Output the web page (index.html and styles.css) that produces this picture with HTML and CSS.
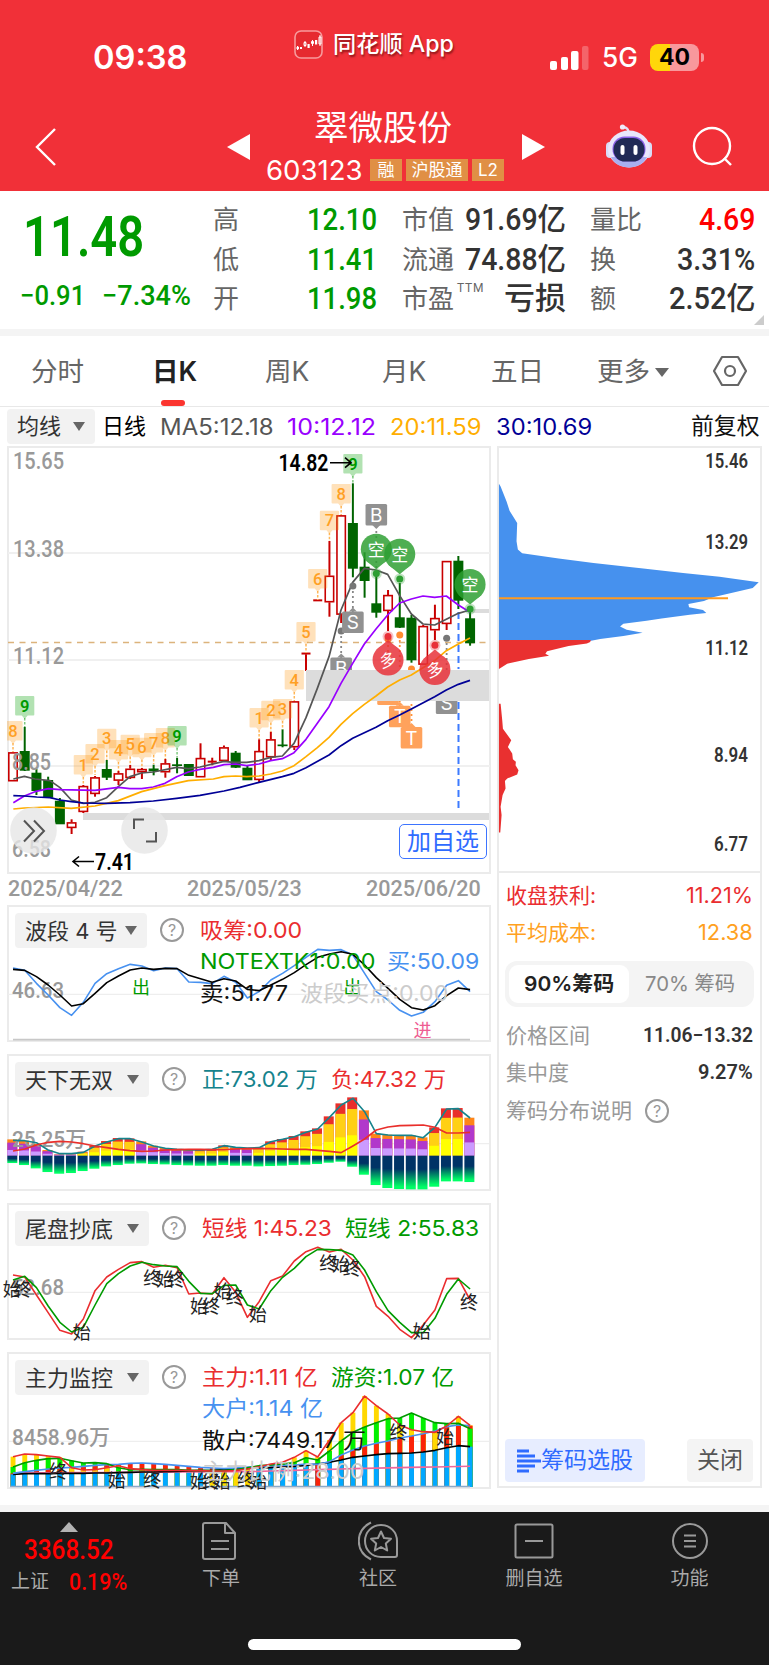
FILE: index.html
```html
<!DOCTYPE html>
<html lang="zh-CN">
<head>
<meta charset="utf-8">
<title>翠微股份 603123</title>
<link rel="stylesheet" href="styles.css">
</head>
<body>
<header class="top">
  <div class="status">
    <div class="clock"><span data-w="95">09:38</span></div>
    <div class="brand">
      <svg width="29" height="29" viewBox="0 0 29 29"><rect x="1" y="1" width="27" height="27" rx="6" fill="#e62a30" stroke="#f79a9c" stroke-width="1.6"/><g stroke="#fff" stroke-width="1" fill="none"><path d="M3.5 16v4M11 11v6M18.500 10v6M26 5v11"/><path d="M3 17h1.500v2H3zM10 12.500h2v3h-2zM17.500 11.500h2v2h-2zM25 7h2v7h-2z"/></g><path d="M6 17h2v2H6zM13.500 14h2.200v4h-2.200zM21 10h2.200v4.500H21z" fill="#fff"/></svg>
      <span data-w="121">同花顺 App</span>
    </div>
    <div class="signal">
      <svg width="40" height="26" viewBox="0 0 40 26"><g fill="#fff"><rect x="0" y="16" width="7" height="9" rx="2"/><rect x="11" y="12" width="7" height="13" rx="2"/><rect x="21" y="6" width="7.500" height="19" rx="2"/><rect x="32" y="1" width="6.500" height="24" rx="2" opacity=".25"/></g></svg>
      <span class="net" data-w="36">5G</span>
      <span class="battery"><span data-w="31">40</span></span><i class="nub"></i>
    </div>
  </div>
  <div class="titlebar">
    <svg class="back" width="24" height="42" viewBox="0 0 24 42"><path d="M21 3 3 21l18 18" fill="none" stroke="#fff" stroke-width="2.400"/></svg>
    <svg class="prev" width="23" height="26" viewBox="0 0 23 26"><path d="M23 0v26L0 13z" fill="#fff"/></svg>
    <div class="name">
      <div class="cn"><span data-w="138">翠微股份</span></div>
      <div class="code"><span class="num" data-w="97">603123</span><b>融</b><b>沪股通</b><b>L2</b></div>
    </div>
    <svg class="next" width="23" height="26" viewBox="0 0 23 26"><path d="M0 0v26l23-13z" fill="#fff"/></svg>
    <svg class="robot" width="48" height="46" viewBox="0 0 48 46"><path d="M23 10C24 6 22 5 19 4" stroke="#e5def5" stroke-width="2.500" fill="none"/><circle cx="17.500" cy="4" r="2.600" fill="#f0eafa"/><rect x="1" y="19" width="8" height="16" rx="4" fill="#d9dcf7"/><rect x="39" y="19" width="8" height="16" rx="4" fill="#d9dcf7"/><ellipse cx="24" cy="26" rx="21" ry="18.500" fill="#e9e6fb"/><path d="M6 34c6 14 30 14 36 0z" fill="#a9aff0"/><rect x="7.500" y="13.500" width="33" height="25" rx="12" fill="#8c62e8"/><rect x="8.500" y="15" width="31" height="23.500" rx="11.500" fill="#202a55"/><rect x="15.500" y="22" width="4" height="10" rx="2" fill="#fff"/><rect x="28.500" y="22" width="4" height="10" rx="2" fill="#fff"/></svg>
    <svg class="search" width="42" height="42" viewBox="0 0 42 42"><g fill="none" stroke="#fff" stroke-width="2.400"><circle cx="20" cy="20" r="18"/><path d="m32 32 7 7"/></g></svg>
  </div>
</header>

<section class="quote">
  <div class="price">
    <div class="last"><span data-w="121">11.48</span></div>
    <div class="chg"><span data-w="65">−0.91</span><span data-w="89">−7.34%</span></div>
  </div>
  <dl class="q1"><dt>高</dt><dd><span data-w="70">12.10</span></dd><dt>低</dt><dd><span data-w="70">11.41</span></dd><dt>开</dt><dd><span data-w="70">11.98</span></dd></dl>
  <dl class="q2"><dt>市值</dt><dd><span data-w="101">91.69亿</span></dd><dt>流通</dt><dd><span data-w="101">74.88亿</span></dd><dt>市盈<sup>TTM</sup></dt><dd><span data-w="62">亏损</span></dd></dl>
  <dl class="q3"><dt>量比</dt><dd class="up"><span data-w="56">4.69</span></dd><dt>换</dt><dd><span data-w="78">3.31%</span></dd><dt>额</dt><dd><span data-w="86">2.52亿</span></dd></dl>
  <i class="corner"></i>
</section>

<nav class="tabs">
  <span>分时</span><span class="on"><span data-w="45">日K</span></span><span>周K</span><span>月K</span><span>五日</span><span>更多<i class="caret"></i></span>
  <svg width="36" height="32" viewBox="0 0 36 32"><g fill="none" stroke="#666" stroke-width="2.200" stroke-linejoin="round"><path d="M10 2h16l8 14-8 14H10L2 16z"/><circle cx="18" cy="16" r="5"/></g></svg>
</nav>

<div class="ma">
  <span class="pill">均线<i class="caret"></i></span>
  <span class="c0" data-w="44">日线</span><span class="c1" data-w="114">MA5:12.18</span><span class="c2" data-w="89">10:12.12</span><span class="c3" data-w="92">20:11.59</span><span class="c4" data-w="96">30:10.69</span><span class="adj" data-w="69">前复权</span>
</div>

<main class="main">
  <div class="left">
    <div class="kbox">
      <svg id="kline" width="484" height="428" viewBox="7 446 484 428"></svg>
      <button class="add">加自选</button>
    </div>
    <div class="dates"><span data-w="115">2025/04/22</span><span data-w="115">2025/05/23</span><span data-w="115">2025/06/20</span></div>
    <section class="panel first"><svg id="p1" width="484" height="137" viewBox="7 905 484 137"></svg>
      <div class="phead"><span class="pill">波段 4 号<i class="caret"></i></span><i class="help">?</i>
      <div class="legend"><p><span class="r" data-w="102">吸筹:0.00</span></p><p><span class="g" data-w="175">NOTEXTK1:0.00</span><span class="b" data-w="92">买:50.09</span></p><p><span class="k" data-w="88">卖:51.77</span><span class="l" data-w="148">波段买点:0.00</span></p></div></div>
    </section>
    <section class="panel"><svg id="p2" width="484" height="137" viewBox="7 1054 484 137"></svg>
      <div class="phead"><span class="pill">天下无双<i class="caret"></i></span><i class="help">?</i>
      <div class="legend"><p><span class="t" data-w="116">正:73.02 万</span><span class="r" data-w="115">负:47.32 万</span></p></div></div>
    </section>
    <section class="panel"><svg id="p3" width="484" height="137" viewBox="7 1203 484 137"></svg>
      <div class="phead"><span class="pill">尾盘抄底<i class="caret"></i></span><i class="help">?</i>
      <div class="legend"><p><span class="r" data-w="130">短线 1:45.23</span><span class="g" data-w="134">短线 2:55.83</span></p></div></div>
    </section>
    <section class="panel"><svg id="p4" width="484" height="137" viewBox="7 1352 484 137"></svg>
      <div class="phead"><span class="pill">主力监控<i class="caret"></i></span><i class="help">?</i>
      <div class="legend"><p><span class="r" data-w="116">主力:1.11 亿</span><span class="g" data-w="123">游资:1.07 亿</span></p><p><span class="b" data-w="121">大户:1.14 亿</span></p><p><span class="k" data-w="164">散户:7449.17 万</span></p><p><span class="l" data-w="162">主力比例:28.00</span></p></div></div>
    </section>
  </div>

  <aside class="chips">
    <svg id="dist" width="264" height="427" viewBox="497 446 264 427"></svg>
    <div class="info">
      <p class="red"><span>收盘获利:</span><span data-w="67">11.21%</span></p>
      <p class="org"><span>平均成本:</span><span data-w="55">12.38</span></p>
      <div class="seg"><span class="on"><span data-w="90">90%筹码</span></span><span><span data-w="90">70% 筹码</span></span></div>
      <p><span>价格区间</span><b data-w="110">11.06−13.32</b></p>
      <p><span>集中度</span><b data-w="55">9.27%</b></p>
      <p class="note"><span>筹码分布说明</span><i class="help">?</i></p>
    </div>
    <div class="acts">
      <button class="pick"><svg width="24" height="24" viewBox="0 0 24 24"><path d="M0 2h12M0 7h18M0 12h24M0 17h18M0 22h12" stroke="#2f6bff" stroke-width="2.800"/></svg>筹码选股</button>
      <button class="close">关闭</button>
    </div>
  </aside>
</main>

<footer class="bar">
  <div class="index"><i class="tri"></i><strong><span data-w="90">3368.52</span></strong><div><span>上证</span><em data-w="58">0.19%</em></div></div>
  <div class="item"><svg width="40" height="40" viewBox="0 0 40 40"><path d="M5 2h21l9 10v24q0 2-2 2H5q-2 0-2-2V4q0-2 2-2zM25 2v10h10M11 20h18M11 28h18"/></svg><span>下单</span></div>
  <div class="item"><svg width="40" height="40" viewBox="0 0 40 40"><path d="M13 1.500C4 6 .8 13 .8 20S4 34 13 38.500M23 4c9 0 16 7 16 16v14q0 2-2 2H23C14 36 7 29 7 20S14 4 23 4z"/><path d="m23 10.500 3 6.500 7 .8-5.200 4.700 1.400 7L23 26l-6.200 3.500 1.400-7L13 17.800l7-.8z"/></svg><span>社区</span></div>
  <div class="item"><svg width="40" height="40" viewBox="0 0 40 40"><path d="M3 3.500h34q1.500 0 1.500 1.500v30q0 1.500-1.500 1.500H3q-1.500 0-1.500-1.500V5Q1.500 3.500 3 3.500zM11 20h18"/></svg><span>删自选</span></div>
  <div class="item"><svg width="40" height="40" viewBox="0 0 40 40"><circle cx="20" cy="20" r="17"/><path d="M14 14.500h12M14 20h12M14 25.500h12"/></svg><span>功能</span></div>
  <i class="home"></i>
</footer>
<script src="charts.js"></script>
</body>
</html>
```
FILE: styles.css
```css
* { box-sizing: border-box; }
body { margin: 0; width: 769px; height: 1665px; overflow: hidden; background: #fff; color: #333; font-family: Inter, "Noto Sans CJK SC", sans-serif; display: flex; flex-direction: column; }
svg { display: block; flex: none; }
p, dl, dd, dt { margin: 0; }
i, em { font-style: normal; }
button { font: inherit; border: 0; padding: 0; }
[data-w] { display: inline-block; white-space: pre; transform-origin: 0 50%; text-align: left; flex: none; }
.caret { display: inline-block; border: 6px solid transparent; border-top: 9px solid #666; border-bottom: 0; }

.top { height: 191px; background: #f13038; color: #fff; flex: none; }
.status { height: 104px; display: grid; grid-template-columns: 201px 256px 1fr; padding-left: 93px; }
.clock { font-size: 33px; font-weight: 600; line-height: 115px; }
.brand { display: flex; gap: 10px; height: 88px; align-items: center; font-size: 23px; font-weight: 500; line-height: 30px; text-shadow: 1px 2px 2px rgba(60, 0, 0, .55); }
.signal { display: flex; align-items: center; height: 115px; }
.net { font-size: 27px; font-weight: 500; margin-left: 12px; }
.battery { margin-left: 12px; width: 49px; height: 27px; border-radius: 8px; background: linear-gradient(90deg, #ffd60a 40%, #f8989c 40%); color: #000; font-weight: 700; font-size: 23px; line-height: 27px; padding-left: 9px; }
.nub { width: 3px; height: 9px; margin-left: 2px; border-radius: 0 3px 3px 0; background: #f8989c; }
.titlebar { height: 87px; display: grid; grid-template-columns: 193px 39px 256px 83px 106px 1fr; padding-left: 34px; align-items: start; }
.back { margin-top: 22px; }
.prev, .next { margin-top: 30px; }
.robot { margin-top: 19px; }
.search { margin-top: 22px; margin-left: -19px; }
.cn { font-size: 34px; line-height: 47px; padding-left: 48px; font-weight: 400; }
.code { display: flex; align-items: center; height: 38px; gap: 4px; }
.code .num { font: 400 27px Inter; margin-right: 3px; }
.code b { background: #e08f45; font-size: 17px; line-height: 22px; height: 22px; font-weight: 400; padding: 0 5.500px; min-width: 32px; text-align: center; white-space: nowrap; }

.quote { position: relative; height: 145px; flex: none; border-bottom: 7px solid #f4f4f4; display: grid; grid-template-columns: 192px 163px 163px 163px; column-gap: 0; padding: 0 0 0 21px; font-family: Roboto, "Noto Sans CJK SC", sans-serif; }
.last { font-size: 55px; font-weight: 600; color: #009a00; line-height: 60px; padding: 16px 0 0 2px; }
.chg { font-size: 28px; font-weight: 500; color: #009a00; line-height: 34px; padding-top: 12px; display: flex; gap: 17px; margin-left: -1px; }
.quote dl { display: grid; grid-auto-rows: 39.500px; align-items: center; line-height: 39px; padding-top: 9px; }
.quote dt { font-size: 26px; color: #666; white-space: nowrap; padding-top: 2px; }
.quote dd { font-size: 31px; font-weight: 500; text-align: right; color: #333; }
.q1 { grid-template-columns: 40px 124px; }
.q1 dd { color: #009a00; }
.q2 { grid-template-columns: 60px 104px; padding-left: 26px; }
.q3 { grid-template-columns: 60px 105px; padding-left: 51px; }
.quote .q1 dd, .quote .q2 dd, .quote .q3 dd { white-space: nowrap; }
.quote .up { color: #f00; }
.quote sup { font-size: 12px; position: absolute; line-height: 14px; margin: 1px 0 0 3px; letter-spacing: .8px; }
.corner { position: absolute; right: 5px; bottom: 4px; border: 5px solid #ccc; border-top-color: transparent; border-left-color: transparent; }

.tabs { height: 71px; flex: none; border-bottom: 1.500px solid #e8e8e8; display: grid; grid-template-columns: 121px 113px 117px 109px 106px 115px 1fr; padding-left: 31px; align-items: center; font-size: 26.500px; color: #666; }
.tabs > span { line-height: 71px; white-space: nowrap; height: 70px; }
.tabs .caret { border-width: 9px 7px 0; margin: 0 0 4px 5px; }
.tabs .on { color: #222; font-weight: 600; position: relative; }
.tabs .on::after { content: ""; position: absolute; left: 9px; bottom: 0; width: 24px; height: 6px; border-radius: 3px; background: #fb352f; }

.ma { height: 39px; flex: none; display: flex; align-items: center; padding: 0 9px 1px 7px; font-size: 22.500px; }
.pill { background: #f2f2f2; border-radius: 4px; height: 35px; display: flex; align-items: center; justify-content: space-between; font-size: 22px; line-height: 34px; color: #333; padding: 0 10px; white-space: nowrap; }
.ma .pill { width: 88px; margin-right: 7px; }
.c0 { color: #000; font-size: 22px; line-height: 34px; }
.c1 { color: #555; margin-left: 14px; }
.c2 { color: #90f; margin-left: 13px; }
.c3 { color: #ffae00; margin-left: 14px; }
.c4 { color: #000096; margin-left: 14px; }
.adj { color: #111; margin-left: auto; line-height: 34px; }

.main { display: grid; grid-template-columns: 484px 265px; gap: 6px; padding-left: 7px; height: 1059px; flex: none; }
.kbox { position: relative; height: 428px; border: 2px solid #ebebeb; }
.kbox svg { margin: -2px; }
.add { position: absolute; left: 390px; top: 376px; width: 88px; height: 35px; border: 1.500px solid #3d74ff; border-radius: 5px; background: #fff; color: #2f6bff; font-size: 24px; line-height: 32px; }
.dates { height: 31px; display: flex; justify-content: space-between; align-items: center; padding: 0 10px 4px 1px; font: 500 22.500px Roboto; color: #999; }
.panel { position: relative; height: 137px; border: 2px solid #ebebeb; margin-bottom: 12px; }
.panel > svg { position: absolute; left: -2px; top: -2px; overflow: visible; }
.phead { position: relative; display: flex; padding: 6px 0 0 6px; }
.panel .pill { width: 134px; flex: none; }
.panel.first .pill { width: 132px; }
.help { width: 24px; height: 24px; border: 2px solid #999; border-radius: 50%; color: #999; font-size: 16px; line-height: 20px; text-align: center; flex: none; }
.phead .help { margin: 5px 0 0 13px; }
.legend { margin-left: 16px; padding-top: 2px; font-size: 22px; }
.legend p { display: flex; gap: 13px; height: 31.300px; line-height: 31px; }
.first .legend p { gap: 12px; }
.r { color: #ea2d2f; } .g { color: #009a00; } .b { color: #4791f0; } .k { color: #111; } .l { color: #ccc; } .t { color: #15838c; }

.chips { border: 2px solid #ebebeb; height: 1042px; width: 265px; display: flex; flex-direction: column; }
.chips > svg { margin: -2px 0 0 -2px; border-bottom: 2px solid #ebebeb; }
.info { padding: 4px 7px 0 7px; }
.info p { display: flex; justify-content: space-between; align-items: center; height: 37px; font-size: 21px; line-height: 35px; padding-bottom: 1px; color: #999; }
.info b { color: #333; font: 600 20px Roboto; }
.info .red { color: #ea2d2f; } .info .org { color: #ffa11f; }
.seg { height: 46px; border-radius: 12px; background: #f4f4f4; padding: 4px; margin: 10px -1px 10px -1px; display: grid; grid-template-columns: 120px 1fr; font-size: 20.500px; color: #888; }
.seg > span { text-align: center; line-height: 38px; border-radius: 9px; }
.seg .on { background: #fff; color: #222; font-weight: 600; }
.info .note { justify-content: start; gap: 13px; height: 40px; }
.acts { margin-top: auto; padding: 0 7px 4px 6px; display: flex; justify-content: space-between; }
.acts button { height: 43px; border-radius: 4px; font-size: 23px; line-height: 41px; }
.pick { width: 140px; background: #e7edff; color: #2f6bff; display: flex; align-items: center; justify-content: center; }
.acts .close { width: 66px; background: #f4f4f4; color: #555; }

.bar { position: relative; height: 160px; flex: none; border-top: 7px solid #f4f4f4; background: #1a1a1a; display: grid; grid-template-columns: 143px 156px 158px 154px 157px; color: #aaa; }
.index { padding: 10px 0 0 11px; }
.tri { display: block; margin-left: 49px; width: 0; border: 9px solid transparent; border-bottom: 10px solid #b3b3b3; border-top: 0; }
.index strong { display: block; font: 500 27px Roboto; color: #f00; line-height: 37px; padding-left: 13px; }
.index div { font-size: 19px; line-height: 26px; display: flex; gap: 20px; }
.index em { font: 500 24px Roboto; line-height: 26px; color: #f00; }
.item { display: flex; flex-direction: column; align-items: center; padding-top: 9px; font-size: 19px; line-height: 36px; }
.item svg { fill: none; stroke: #999; stroke-width: 2; stroke-linejoin: round; }
.item:nth-child(2) svg { margin-left: -3px; }
.home { position: absolute; left: 248px; top: 127px; width: 273px; height: 11px; border-radius: 6px; background: #fff; }
```
FILE: charts.js
```js
const NS = 'http://www.w3.org/2000/svg';
const X = i => 13 + 11.72 * i;
const DIN = 'Roboto, "Noto Sans CJK SC", sans-serif';
const CJK = '"Noto Sans CJK SC", sans-serif';

function el(svg, tag, attrs, text) {
  const e = document.createElementNS(NS, tag);
  for (const k in attrs) e.setAttribute(k, attrs[k]);
  if (text) e.textContent = text;
  svg.appendChild(e);
  return e;
}
const rect = (s, x, y, w, h, fill, more) => el(s, 'rect', { x, y, width: w, height: h, fill, ...more });
const line = (s, x1, y1, x2, y2, stroke, w = 1.6, more) => el(s, 'line', { x1, y1, x2, y2, stroke, 'stroke-width': w, ...more });
const text = (s, x, y, t, size, fill, more) => el(s, 'text', { x, y, 'font-size': size, fill, 'font-family': DIN, ...more }, t);
const fitted = (s, x, y, w, t, size, fill, more) => text(s, x, y, t, size, fill, { textLength: w, lengthAdjust: 'spacingAndGlyphs', ...more });
const mark = (s, x, cy, t, fill = '#222', size = 18) => text(s, x, cy + size * .37, t, size, fill, { 'text-anchor': 'middle', 'font-family': CJK });
const series = (s, ys, y0, color, w = 1.6) => el(s, 'polyline', { points: ys.map((y, i) => X(i) + ',' + (y0 + y / 3)).join(' '), fill: 'none', stroke: color, 'stroke-width': w, 'stroke-linejoin': 'round' });
const path = (s, pts, color, w = 1.7) => el(s, 'polyline', { points: pts.map(p => p.join(',')).join(' '), fill: 'none', stroke: color, 'stroke-width': w, 'stroke-linejoin': 'round' });

/* Candlestick chart */
const k = document.getElementById('kline');
[553, 660, 766].forEach(y => line(k, 8, y, 490, y, '#f0f0f0', 2));
line(k, 8, 642.500, 489, 642.500, '#dcb37c', 1.3, { 'stroke-dasharray': '6 5.500' });

const R = '#c80000', G = '#006400';
const candles = [
  [R,752.3,781.3],[G,751,770.7,727,771],[G,772.7,791,769,795],[G,780,797.7,776.7,798],[G,800.7,824.3,798,824],
  [R,822.3,828,819.3,834],[R,786,812,785,813],[R,777.3,794,776,796.7],[G,769,777.7,760,780],[R,773.3,780.7,771,785],
  [R,768.7,778,765,779],[R,769,772.3,768,779],[G,768.5,771.3,764.7,775.3],[R,763.3,772.3,759,777.7],[G,764.3,766,757.7,773.3],
  [G,764,776,764,776],[R,758,777.3,743.3,777],[R,761,762.3,757.7,765.3],[R,747.3,761,745.5,761],[G,752.7,767.7,751,768],
  [G,767.7,780.3,765,780],[R,751,780,739.3,782.3],[R,739.3,757.3,731.7,760],[G,744.5,746.2,729.3,747.3],[R,701.3,747.3,701,750],
  [R,652.8,654.3,653,671],[R,599.7,601,600,601],[R,575.7,602.3,541,616.7],[R,515.3,614.7,515,623],[G,523,568.7,483.3,577.3],
  [G,566.7,581,552.3,597.7],[G,603.3,612.7,575,617.7],[R,595,611,590,631],[G,617.3,627.7,583,628],[G,617.7,660.3,615,662.7],
  [R,626,664.7,625,665],[R,618,630.3,604.7,640],[R,561,624,561,630],[G,560.7,600.7,556,609],[G,618.3,643.3,611.7,645.7]
];

const dotted = (i, a, b, c) => line(k, X(i), a, X(i), b, c, 1.8, { 'stroke-dasharray': '2 3' });
const dot = (i, y, c, halo) => { if (halo) el(k, 'circle', { cx: X(i), cy: y, r: 5.500, fill: c, opacity: .3 }); el(k, 'circle', { cx: X(i), cy: y, r: 3.500, fill: c }); };
function tag(i, y, t, c, up) {
  rect(k, X(i) - 10.800, y, 21.600, 21.600, c, { rx: 1.500 });
  el(k, 'path', { d: up ? `M${X(i) - 4} ${y}l4-4 4 4z` : `M${X(i) - 4} ${y + 21}l4 4 4-4z`, fill: c });
  text(k, X(i), y + 17.500, t, 19, '#fff', { 'text-anchor': 'middle', 'font-family': 'Inter' });
}
dotted(28, 631, 658, '#888'); dot(28, 631, '#777'); tag(28, 657.5, 'B', '#919191', true);
dotted(37, 638, 693, '#888'); tag(37, 692.5, 'S', '#919191', true);
dotted(32, 640, 684, '#ff9238'); tag(32, 683.5, 'T', '#ffa25c', true);
dotted(33, 635, 706, '#ff9238'); dot(33, 635, '#ff8c30'); tag(33, 705.7, 'T', '#ffa25c', true);
dotted(34, 669, 728, '#ff9238'); dot(34, 669, '#ff8c30'); tag(34, 727, 'T', '#ffa25c', true);

candles.forEach(([c, t, b, hi, lo], i) => {
  const x = X(i);
  if (c === R) {
    if (hi && hi < t) line(k, x, hi, x, t, c, 2);
    if (lo && lo > b) line(k, x, b, x, lo, c, 2);
    if (b - t < 2) line(k, x - 4.5, (t + b) / 2, x + 4.5, (t + b) / 2, c, 2);
    else rect(k, x - 4.2, t + .6, 8.4, b - t - 1.2, '#fff', { stroke: c, 'stroke-width': 1.6 });
  } else {
    line(k, x, hi, x, lo, c, 2);
    rect(k, x - 5, t, 10, b - t, c);
  }
});
rect(k, 306, 670, 183, 31, '#dcdcdc');
rect(k, 83, 813, 406, 7, '#dcdcdc');
rect(k, 471, 609, 18, 4, '#dcdcdc');
line(k, 458.500, 612, 458.500, 669, '#3d7bff', 2, { 'stroke-dasharray': '7 4' });
line(k, 458.500, 702, 458.500, 810, '#3d7bff', 2, { 'stroke-dasharray': '7 4' });

[['15.65', 13, 469, 51], ['13.38', 13, 557, 51], ['11.12', 13, 663.5, 51], ['8.85', 12, 770, 39], ['6.58', 12, 857, 39]]
  .forEach(a => fitted(k, a[1], a[2], a[3], a[0], 23, '#999', { 'font-weight': 500 }));

const a = pts => pts.map(([x, y]) => [x / 3, 440 + y / 3]);
const b = pts => pts.map(([x, y]) => [240 + x / 3, 640 + y / 3]);
const c = pts => pts.map(([x, y]) => [240 + x / 3, 440 + y / 3]);
path(k, [...a([[40,1017],[73,1009],[105,1017],[150,1022],[180,1043],[214,1080],[250,1090],[285,1087],[320,1073],[355,1040],[390,1010],[425,999],[460,996],[530,982],[565,986],[600,981],[672,964],[700,967]]),
  ...b([[20,367],[57,362],[92,352],[127,348],[162,310],[198,233],[232,145],[267,50]]), ...c([[303,510],[338,427],[373,385],[408,390],[443,403],[479,467],[514,522],[549,552],[584,555],[619,538],[655,520],[690,510]])], '#555');
path(k, [...a([[40,1088],[73,1068],[105,1055],[145,1046],[180,1049],[285,1051],[355,1042],[390,1046],[425,1046],[460,1041],[495,1030],[530,1010],[565,996],[600,988],[640,982],[672,974],[707,972]]),
  ...b([[20,377],[57,372],[92,362],[127,356],[162,338],[198,298],[232,250],[267,200],[303,130],[338,70]]), ...c([[373,612],[408,567],[443,525],[479,489],[514,477],[549,468],[584,472],[619,468],[655,495],[690,517]])], '#90f');
path(k, [...a([[40,1107],[73,1104],[145,1101],[214,1105],[285,1098],[355,1082],[425,1055],[495,1037],[565,1022],[640,1017],[672,1010],[707,1008]]),
  ...b([[20,410],[57,408],[92,402],[127,393],[162,377],[198,350],[232,323],[267,292],[303,253],[338,221],[373,193],[408,168],[443,141],[479,120],[514,105],[549,83],[584,62],[619,32],[655,12],[690,-6]])], '#ffae00');
path(k, [...a([[40,1067],[73,1068],[110,1071],[150,1073],[180,1080],[214,1085],[250,1089],[320,1090],[390,1088],[460,1083],[530,1075],[600,1066],[672,1053]]),
  ...b([[0,442],[57,427],[127,410],[162,400],[198,383],[267,345],[303,317],[338,295],[408,262],[443,242],[479,225],[514,207],[584,170],[619,150],[655,133],[690,121]])], '#000096');

[[0,721,8],[1,696,9],[6,755,1],[7,744,2],[8,728.7,3],[9,740,4],[10,734.7,5],[11,737.7,6],[12,733,7],[13,728,8],[14,726,9],[21,708,1],[22,700.7,2],[23,699,3],[24,670,4],[25,622,5],[26,569,6],[27,510.7,7],[28,484,8],[29,454,9]].forEach(([i, y, n]) => {
  const green = n === 9, x = X(i), fill = green ? '#00a000' : '#ff9000';
  line(k, x, y + 22, x, Math.min(y + 31, candles[i][3] || candles[i][1]), green ? '#7fca7f' : '#ffb75a', 1.500, { 'stroke-dasharray': '2.500 1.500' });
  el(k, 'path', { d: `M${x - 8.600} ${y}h17.200q1 0 1 1v17.500q0 1-1 1h-5.600l-3 3.500-3-3.500h-5.600q-1 0-1-1v-17.500q0-1 1-1z`, fill, opacity: green ? .3 : .27 });
  text(k, x, y + 15.600, String(n), 16.500, green ? '#009a00' : '#ffa024', { 'text-anchor': 'middle', 'font-weight': green ? 600 : 500 });
});

dotted(31, 526, 572, '#888'); tag(31, 504, 'B', '#919191');
dotted(29, 586, 612, '#888'); dot(29, 586, '#777'); tag(29, 611.5, 'S', '#919191', true);
dot(37, 638.300, '#777'); dot(32, 639, '#ff8c30');

function pin(i, cy, dy, t, color) {
  const x = X(i), up = dy < cy, d = up ? -1 : 1;
  dot(i, dy, color, true);
  const g = el(k, 'g', { opacity: .84 });
  el(g, 'path', { d: `M${x - 12} ${cy + d * 10}L${x} ${cy + d * 20}L${x + 12} ${cy + d * 10}z`, fill: color });
  el(g, 'circle', { cx: x, cy, r: 15.500, fill: color });
  const m = mark(k, x, cy, t, '#fff', 17);
  if (up) m.setAttribute('transform', `rotate(-14 ${x} ${cy})`);
}
pin(31, 549.300, 573.500, '空', '#2d9f32');
pin(33, 554.300, 579, '空', '#2d9f32');
pin(39, 584.500, 609, '空', '#2d9f32');
pin(32, 660, 636.500, '多', '#e83038');
pin(36, 669.500, 645.300, '多', '#e83038');

fitted(k, 278.500, 471, 50, '14.82', 23, '#000', { 'font-weight': 600 });
el(k, 'path', { d: 'M330 462.700h21m-6-5 6 5-6 5', stroke: '#000', 'stroke-width': 1.600, fill: 'none' });
fitted(k, 95, 870, 39, '7.41', 23, '#000', { 'font-weight': 600 });
el(k, 'path', { d: 'M94 861.500H73m6-5-6 5 6 5', stroke: '#000', 'stroke-width': 1.600, fill: 'none' });
el(k, 'circle', { cx: 33.500, cy: 830.500, r: 23.300, fill: '#e6e6e6', opacity: .8 });
el(k, 'circle', { cx: 144.500, cy: 830.500, r: 23.300, fill: '#e6e6e6', opacity: .8 });
el(k, 'path', { d: 'M24 820.500l10 10.500-10 10.500M34 820.500l10 10.500-10 10.500M134 829v-9.500h10M146 841.500h10V832', stroke: '#555', 'stroke-width': 2, fill: 'none' });

/* Chip distribution */
const s = document.getElementById('dist');
const area = (pts, fill) => el(s, 'polygon', { points: pts.map(([x, y]) => (490 + x / 3) + ',' + (440 + y / 3)).join(' '), fill });
area([[25,132],[30,140],[48,185],[57,213],[80,250],[78,305],[82,330],[95,341],[205,357],[310,371],[460,387],[580,401],[690,412],[808,429],[790,446],[735,459],[670,474],[643,485],[596,494],[598,504],[640,512],[650,521],[600,527],[515,538],[470,545],[400,554],[390,562],[410,572],[458,581],[400,591],[330,600],[303,605],[25,605]], '#4691ee');
area([[25,603],[302,603],[300,609],[290,613],[235,621],[170,637],[165,644],[176,650],[115,660],[50,674],[25,690]], '#e93030');
area([[25,795],[30,795],[35,845],[37,870],[62,905],[52,925],[65,945],[67,962],[76,970],[75,980],[84,995],[80,1008],[50,1020],[43,1028],[45,1050],[36,1070],[30,1105],[33,1130],[29,1183],[25,1183]], '#e93030');
line(s, 498.500, 599, 728.500, 599, '#ff9a1f', 2);
[['15.46', 468.300, 43], ['13.29', 549.300, 43], ['11.12', 656.300, 43], ['8.94', 763.300, 34], ['6.77', 852.700, 34]]
  .forEach(([t, y, w]) => fitted(s, 748.500 - w, y, w, t, 19.500, '#333', { 'font-weight': 600 }));

/* Band indicator */
const p1 = document.getElementById('p1');
line(p1, 8, 994.300, 489, 994.300, '#eee', 1.300);
fitted(p1, 12, 998, 52, '46.63', 22, '#999', { 'font-weight': 500 });
line(p1, 13, 1039.600, 470, 1039.600, '#c8c8c8', 1.600);
series(p1, [219,226,265,300,338,361,322,265,236,221,208,213,227,219,221,261,262,266,244,262,309,290,255,235,212,187,163,166,164,180,235,290,315,346,363,352,320,271,257,290], 895, '#4791f0');
series(p1, [223,226,245,270,300,333,326,295,263,243,225,219,223,220,221,241,251,262,251,258,283,287,270,253,233,209,187,177,170,178,210,248,280,313,338,345,332,302,279,284], 895, '#000');
mark(p1, 141, 987, '出', '#009a00'); mark(p1, 352.500, 987, '出', '#009a00'); mark(p1, 422.500, 1030, '进', '#ee5d92');

/* Positive / negative energy bars */
const p2 = document.getElementById('p2');
const grad = el(el(p2, 'defs', {}), 'linearGradient', { id: 'deep', x1: 0, y1: 0, x2: 0, y2: 1 });
[[0, '#036'], [.4, '#036'], [.93, '#0f6'], [1, '#0f6']].forEach(([offset, color]) => el(grad, 'stop', { offset, 'stop-color': color }));
line(p2, 8, 1143.700, 489, 1143.700, '#eee', 1.300);
const tops = [283,287,296,315,328,328,320,302,288,279,280,289,302,309,313,315,315,314,301,307,309,307,289,282,273,259,250,214,175,157,196,266,269,270,271,277,247,190,189,218];
const kinds = 'ppppppyyyyypppppyyyppyyyyyyyyyppppppyyyp';
const lows = [354,360,370,381,386,384,378,371,364,360,356,355,357,358,360,361,362,362,360,362,362,364,363,362,360,359,357,353,350,365,389,420,429,432,433,433,425,409,409,411];
tops.forEach((t, i) => {
  const x = X(i) - 5.700, h = (332 - t) / 3, base = 1155.7;
  const [c1, c2, c3] = kinds[i] === 'y' ? ['#e92f2b', '#ffd014', '#ff0'] : ['#ff8518', '#b138cb', '#cb9bff'];
  rect(p2, x, base - h, 10, h, c1);
  rect(p2, x, base - h * .8, 10, h * .8, c2);
  rect(p2, x, base - h * .35, 10, h * .35, c3);
  rect(p2, x, base, 10, (lows[i] - 332) / 3, 'url(#deep)');
});
fitted(p2, 12, 1147, 74, '25.25万', 22, '#999', { 'font-weight': 500 });
series(p2, [286,287,293,315,326,326,322,303,291,281,281,291,303,310,313,315,315,313,302,307,309,308,290,283,275,262,252,217,180,160,200,266,270,271,271,278,247,192,191,219], 1045, '#15838c');
series(p2, [318,312,300,292,289,291,296,303,308,313,317,319,318,315,314,313,313,314,314,312,311,311,311,312,313,313,316,319,323,303,282,255,246,242,241,240,247,264,264,262], 1045, '#e92f2b');

/* Short-term oscillator */
const p3 = document.getElementById('p3');
line(p3, 8, 1292.300, 489, 1292.300, '#eee', 1.300);
fitted(p3, 12, 1295, 52, '52.68', 22, '#999', { 'font-weight': 500 });
series(p3, [240,246,300,353,406,417,372,287,246,223,203,200,217,211,218,297,294,297,248,292,367,320,257,243,198,170,157,171,163,195,245,334,364,403,428,390,345,251,250,315], 1195, '#ea2d2f');
series(p3, [255,244,278,333,382,411,397,330,266,236,213,202,209,213,215,259,295,296,271,270,330,342,287,247,220,185,163,164,166,180,225,290,347,382,413,413,370,298,252,282], 1195, '#009a00');
[[35,282,'始'],[67,282,'终'],[245,412,'始'],[457,250,'终'],[495,252,'始'],[527,252,'终'],[597,335,'始'],[633,335,'终'],[668,290,'始'],[704,308,'终'],[773,358,'始'],[985,205,'终'],[1022,208,'始'],[1055,220,'终'],[1265,410,'始'],[1407,323,'终']]
  .forEach(([x, y, t]) => mark(p3, x / 3, 1195 + y / 3, t));

/* Fund monitor */
const p4 = document.getElementById('p4');
line(p4, 8, 1441.300, 489, 1441.300, '#eee', 1.300);
fitted(p4, 12, 1445, 98, '8458.96万', 22, '#999', { 'font-weight': 500 });
const main = [335,327,329,333,337,368,375,374,368,362,371,374,376,376,376,377,377,378,378,377,372,365,357,352,337,317,336,285,233,203,153,182,207,240,254,260,262,243,214,241];
const hot = [366,353,346,341,340,347,354,353,356,368,374,373,374,374,374,376,376,377,377,374,368,362,360,357,353,338,345,318,288,262,246,233,221,219,204,219,233,236,235,251];
const big = [385,380,376,372,369,367,364,361,359,358,355,354,356,358,361,364,367,369,371,369,366,365,363,361,360,357,358,350,330,315,303,295,288,279,273,266,258,245,240,242];
const retail = [388,386,386,386,385,385,385,384,384,383,382,381,381,380,379,378,377,376,374,372,370,369,368,366,364,361,357,352,345,337,333,329,326,325,324,321,316,308,302,305];
const ratio = retail.map((_, i) => i < 20 ? 384 - i * .2 : i < 30 ? 380 - (i - 20) : 370 - (i - 30) * .7);
main.forEach((_, i) => {
  [[main[i], '#ffd800'], [hot[i], '#00f000'], [big[i], '#fb2208'], [retail[i], '#00a8ff']].sort((m, n) => m[0] - n[0])
    .forEach(([y, color]) => rect(p4, X(i) - 2.400, 1345 + y / 3, 4.900, (426 - y) / 3, color));
});
line(p4, 10, 1486.500, 470, 1486.500, '#8ba9c7', 1.500);
series(p4, ratio, 1345, '#f0679b'); series(p4, retail, 1345, '#000'); series(p4, big, 1345, '#4791f0'); series(p4, hot, 1345, '#009a00'); series(p4, main, 1345, '#ea2d2f');
[[175,380,'终'],[350,407,'始'],[457,407,'终'],[597,408,'始'],[633,408,'终'],[665,408,'始'],[738,405,'终'],[775,408,'始'],[1195,262,'终'],[1335,278,'始']]
  .forEach(([x, y, t]) => mark(p4, x / 3, 1345 + y / 3, t));

/* Condense figures to their column widths */
document.querySelectorAll('[data-w]').forEach(e => {
  const w = +e.dataset.w, natural = e.offsetWidth;
  e.style.width = w + 'px';
  e.style.transform = `scaleX(${w / natural})`;
});
```
